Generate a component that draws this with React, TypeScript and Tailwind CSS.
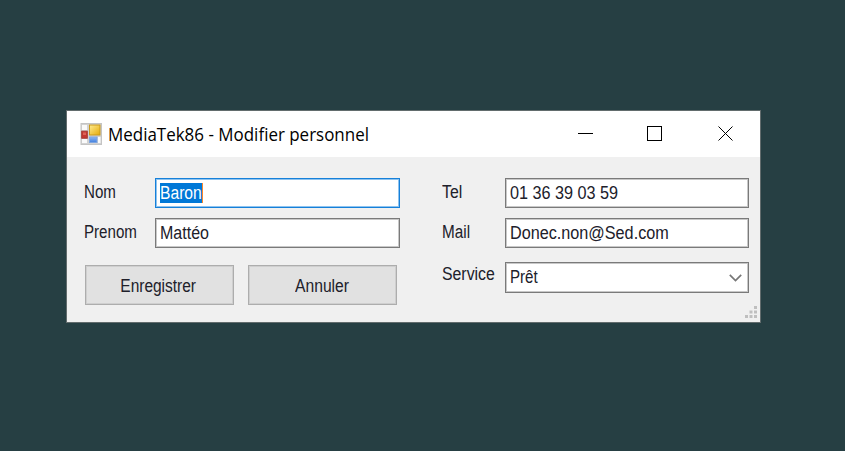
import type { ReactNode } from "react";

const label = "block origin-left whitespace-nowrap text-[18px] leading-[20px]";
const field =
  "flex h-[30px] items-center border border-[#7a7a7a] bg-white pl-1 shadow-[inset_0_0_0_1px_#c8c8c8]";
const button =
  "flex h-[40px] w-[149px] items-center justify-center border border-[#adadad] bg-[#e1e1e1] pt-[2px] shadow-[inset_0_0_0_1px_#cfcfcf]";

function Text({ className, children }: { className: string; children: ReactNode }) {
  return <span className={`${label} ${className}`}>{children}</span>;
}

function AppIcon() {
  return (
    <svg width="22" height="22" viewBox="0 0 22 22">
      <defs>
        <linearGradient id="gold" x1="0" y1="0" x2="1" y2="1">
          <stop offset="0" stopColor="#ffec91" />
          <stop offset="1" stopColor="#e5aa08" />
        </linearGradient>
        <linearGradient id="blue" x1="0" y1="0" x2="0" y2="1">
          <stop offset="0" stopColor="#8cb5f5" />
          <stop offset="1" stopColor="#417fdc" />
        </linearGradient>
      </defs>
      <rect x="1" y=".5" width="20.5" height="21" fill="#d2d2d2" stroke="#c4c4c4" />
      <path d="M2 2h5v5H2zM2 16h5v4H2zM18 14h2.500v6H18z" fill="#fafafa" />
      <rect x="1.7" y="8.200" width="5.600" height="7" fill="#c53730" stroke="#a93a31" />
      <rect x="3" y="9.500" width="3" height="2.500" fill="#dd6256" />
      <rect x="9.500" y="2" width="10.500" height="10" fill="url(#gold)" stroke="#c99a1c" />
      <rect x="9.500" y="14" width="7.500" height="5.500" fill="url(#blue)" stroke="#7ea5e0" />
    </svg>
  );
}

export default function App() {
  return (
    <main className="h-[451px] w-[845px] bg-[#263f43] pl-[66px] pt-[110px] font-['Liberation_Sans',Arial,sans-serif] text-[#20202a]">
      <section className="h-[213px] w-[695px] border border-[#626c6d] bg-[#f0f0f0]">
        <header className="flex h-[46px] items-center bg-white pl-[13px] text-black">
          <AppIcon />
          <h1 className="ml-[6px] w-[263px] origin-left scale-x-[0.969] whitespace-nowrap pb-px font-['Open_Sans','Noto_Sans',sans-serif] text-[17.5px] leading-[24px]">
            MediaTek86 - Modifier personnel
          </h1>
          <svg className="ml-[207px]" width="158" height="18" viewBox="0 0 158 18" fill="none" stroke="black" shapeRendering="crispEdges">
            <path d="M0 8.5h15" />
            <path d="M69.5 1.5h14v14h-14z" />
            <path d="M140.5 1.5l14 14M154.5 1.5l-14 14" shapeRendering="auto" strokeWidth="1" />
          </svg>
        </header>
        <div className="flex pl-[17px] pt-[21px]">
          <div className="w-[316px]">
            <div className="flex">
              <div className="w-[71px] pt-[4px]"><Text className="scale-x-[0.84]">Nom</Text></div>
              <div className="flex h-[30px] w-[245px] items-center border border-[#1680d9] bg-white pl-1 shadow-[inset_0_0_0_1px_#8ec3ef]">
                <span className="flex h-[20px] w-[43px] items-center border-r border-[#ff8728] bg-[#0078d7] text-white">
                  <Text className="scale-x-[0.87]">Baron</Text>
                </span>
              </div>
            </div>
            <div className="mt-[10px] flex">
              <div className="w-[71px] pt-[4px]"><Text className="scale-x-[0.84]">Prenom</Text></div>
              <div className={`${field} w-[245px]`}><Text className="scale-x-[0.89]">Mattéo</Text></div>
            </div>
            <div className="mt-[17px] flex gap-[14px] pl-px">
              <button className={button}><span className="block scale-x-[0.86] pr-[2px] text-[18px]">Enregistrer</span></button>
              <button className={button}><span className="block scale-x-[0.87] text-[18px]">Annuler</span></button>
            </div>
          </div>
          <div className="ml-[42px] w-[308px]">
            <div className="flex">
              <div className="w-[63px] pt-[4px]"><Text className="scale-x-[0.88]">Tel</Text></div>
              <div className={`${field} w-[244px]`}><Text className="scale-x-[0.9]">01 36 39 03 59</Text></div>
            </div>
            <div className="mt-[10px] flex">
              <div className="w-[63px] pt-[4px]"><Text className="scale-x-[0.85]">Mail</Text></div>
              <div className={`${field} w-[244px]`}><Text className="scale-x-[0.9]">Donec.non@Sed.com</Text></div>
            </div>
            <div className="mt-[14px] flex">
              <div className="w-[63px] pt-[2px]"><Text className="scale-x-[0.88]">Service</Text></div>
              <div className="flex h-[31px] w-[244px] items-center justify-between border border-[#7a7a7a] bg-white pl-1 pr-[6px] shadow-[inset_0_0_0_1px_#c8c8c8]">
                <Text className="scale-x-[0.84] pb-[2px]">Prêt</Text>
                <svg width="13" height="8" viewBox="0 0 13 8" fill="none" stroke="#777" strokeWidth="1.7">
                  <path d="M.8 .8l5.7 5.7L12.2 .8" />
                </svg>
              </div>
            </div>
            <svg className="ml-[302px] mt-[13px]" width="14" height="13" viewBox="0 0 14 13" fill="#bfbfbf">
              <path d="M10 0h3v3h-3zM5.5 4.5h3v3h-3zM10 4.5h3v3h-3zM1 9h3v3H1zM5.5 9h3v3h-3zM10 9h3v3h-3z" />
            </svg>
          </div>
        </div>
      </section>
    </main>
  );
}
